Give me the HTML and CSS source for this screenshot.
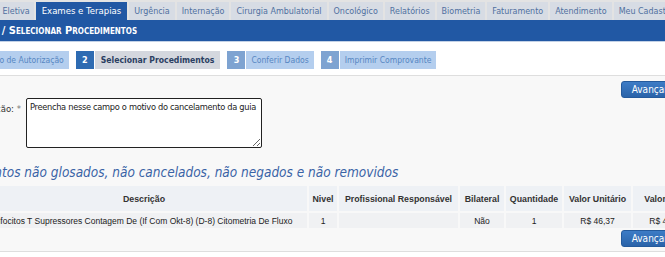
FILE: index.html
```html
<!DOCTYPE html>
<html lang="pt-BR">
<head>
  <meta charset="UTF-8">
  <title>Selecionar Procedimentos</title>
  <link rel="stylesheet" href="styles.css">
</head>
<body>
  <div class="tabs">
    <a class="tab tab-first">Consulta Eletiva</a>
    <a class="tab active">Exames e Terapias</a>
    <a class="tab">Urgência</a>
    <a class="tab">Internação</a>
    <a class="tab">Cirurgia Ambulatorial</a>
    <a class="tab">Oncológico</a>
    <a class="tab">Relatórios</a>
    <a class="tab">Biometria</a>
    <a class="tab">Faturamento</a>
    <a class="tab">Atendimento</a>
    <a class="tab">Meu Cadastro</a>
  </div>
  <div class="titlebar">Solicitação / Selecionar Procedimentos</div>

  <div class="steps">
    <div class="step step-first"><span class="label">Tipo de Autorização</span></div>
    <div class="step current"><span class="num">2</span><span class="label">Selecionar Procedimentos</span></div>
    <div class="step"><span class="num">3</span><span class="label">Conferir Dados</span></div>
    <div class="step"><span class="num">4</span><span class="label">Imprimir Comprovante</span></div>
  </div>

  <div class="content">
    <div class="actions"><button class="btn">Avançar</button></div>

    <div class="field">
      <label class="field-label">Justificativa da Alteração: <span class="req">*</span></label>
      <textarea class="motivo">Preencha nesse campo o motivo do cancelamento da guia</textarea>
    </div>

    <h2 class="section-title">Procedimentos não glosados, não cancelados, não negados e não removidos</h2>

    <table class="grid">
      <thead>
        <tr>
          <th class="col-desc">Descrição</th>
          <th class="col-nivel">Nivel</th>
          <th class="col-prof">Profissional Responsável</th>
          <th class="col-bil">Bilateral</th>
          <th class="col-qtd">Quantidade</th>
          <th class="col-valor">Valor Unitário</th>
          <th class="col-valor">Valor Total</th>
        </tr>
      </thead>
      <tbody>
        <tr>
          <td class="col-desc">Linfocitos T Supressores Contagem De (If Com Okt-8) (D-8) Citometria De Fluxo</td>
          <td>1</td>
          <td></td>
          <td>Não</td>
          <td>1</td>
          <td>R$ 46,37</td>
          <td>R$ 46,37</td>
        </tr>
      </tbody>
    </table>

    <div class="actions actions-bottom"><button class="btn">Avançar</button></div>
  </div>
</body>
</html>
```

FILE: styles.css
```css
body {
  margin: 0;
  width: 665px;
  overflow: hidden;
  background: #fff;
  font-family: "DejaVu Sans Condensed", "DejaVu Sans", Verdana, sans-serif;
  font-stretch: condensed;
}

.tabs {
  display: flex;
  gap: 2px;
  padding-top: 2px;
  background: #e3e3e3;
  margin-left: -40px;
  white-space: nowrap;
}
.tab {
  display: block;
  height: 18px;
  line-height: 18px;
  padding: 0 5px;
  font-size: 8.9px;
  color: #5070a0;
  background: #d7dce4;
}
.tab-first {
  padding-right: 4px;
}
.tab.active {
  padding: 0 6px;
  font-size: 9.5px;
  background: #2158a4;
  color: #fff;
}

.titlebar {
  height: 21px;
  line-height: 21px;
  background: #2158a4;
  color: #fff;
  font-weight: bold;
  font-size: 11px;
  font-variant: small-caps;
  margin-left: -57px;
  border-bottom: 1px solid #c2d1e6;
  white-space: nowrap;
}

.steps {
  display: flex;
  gap: 7px;
  padding: 9px 0 0;
  height: 20px;
  margin-left: -17px;
  white-space: nowrap;
}
.step {
  display: flex;
  gap: 1px;
  height: 18px;
}
.step .num {
  width: 18px;
  line-height: 18px;
  text-align: center;
  font-size: 9px;
  font-weight: bold;
  color: #fff;
  background: #7ea3d1;
}
.step .label {
  padding: 0 5px;
  line-height: 18px;
  font-size: 8.5px;
  color: #5686c2;
  background: #b4ceee;
}
.step.current .num {
  background: #2e6bb2;
}
.step.current .label {
  padding: 0 6px;
  font-size: 8.6px;
  background: #d4d7de;
  color: #2b3f62;
  font-weight: bold;
}

.content {
  margin-top: 4px;
  border-top: 1px solid #dedede;
  border-bottom: 1px solid #dedede;
  background: #f8f8f8;
  padding: 5px 0 4px;
}

.actions {
  display: flex;
  justify-content: flex-end;
  margin-right: -14px;
}
.btn {
  height: 17px;
  padding: 0 10px;
  border: 1px solid #245a9c;
  border-radius: 3px;
  background: linear-gradient(#3d7cc6, #2a63a9);
  color: #fff;
  font-family: "DejaVu Sans Condensed", "DejaVu Sans", Verdana, sans-serif;
  font-stretch: condensed;
  font-size: 10px;
  line-height: 15px;
}

.field {
  display: flex;
  align-items: flex-start;
  margin-left: -150px;
}
.field-label {
  font-size: 9.5px;
  color: #333;
  padding-top: 5px;
  width: 171px;
  text-align: right;
  margin-right: 5px;
  white-space: nowrap;
}
.req {
  color: #777;
}
.motivo {
  width: 236px;
  height: 50px;
  box-sizing: border-box;
  margin: 0;
  padding: 2px 3px;
  border: 1px solid #222;
  border-radius: 2px;
  font-family: "DejaVu Sans Condensed", "DejaVu Sans", Verdana, sans-serif;
  font-stretch: condensed;
  font-size: 9.2px;
  letter-spacing: -0.3px;
  color: #222;
  resize: vertical;
}

.section-title {
  margin: 16px 0 0 -70px;
  font-size: 13.5px;
  font-weight: normal;
  font-style: italic;
  color: #3a63a6;
  white-space: nowrap;
}

.grid {
  width: 723px;
  margin: 4px 0 0 -21px;
  border-collapse: separate;
  border-spacing: 2px;
  table-layout: fixed;
  font-family: "Liberation Sans", Arial, sans-serif;
  font-stretch: normal;
  font-size: 8.8px;
  color: #222;
}
.grid th {
  height: 25px;
  padding: 0;
  background: #eef1f5;
  font-weight: bold;
  color: #333;
  white-space: nowrap;
}
.grid td {
  height: 15px;
  padding: 0;
  background: #f0f1f3;
  font-size: 8.5px;
  text-align: center;
  white-space: nowrap;
}
.grid .col-desc {
  width: 326px;
}
.grid td.col-desc {
  text-align: left;
  padding-left: 8px;
}
.grid .col-nivel {
  width: 28px;
}
.grid .col-prof {
  width: 119px;
}
.grid .col-bil {
  width: 44px;
}
.grid .col-qtd {
  width: 56px;
}
.grid .col-valor {
  width: 67px;
}

.actions-bottom {
  margin-top: 0;
}
```
